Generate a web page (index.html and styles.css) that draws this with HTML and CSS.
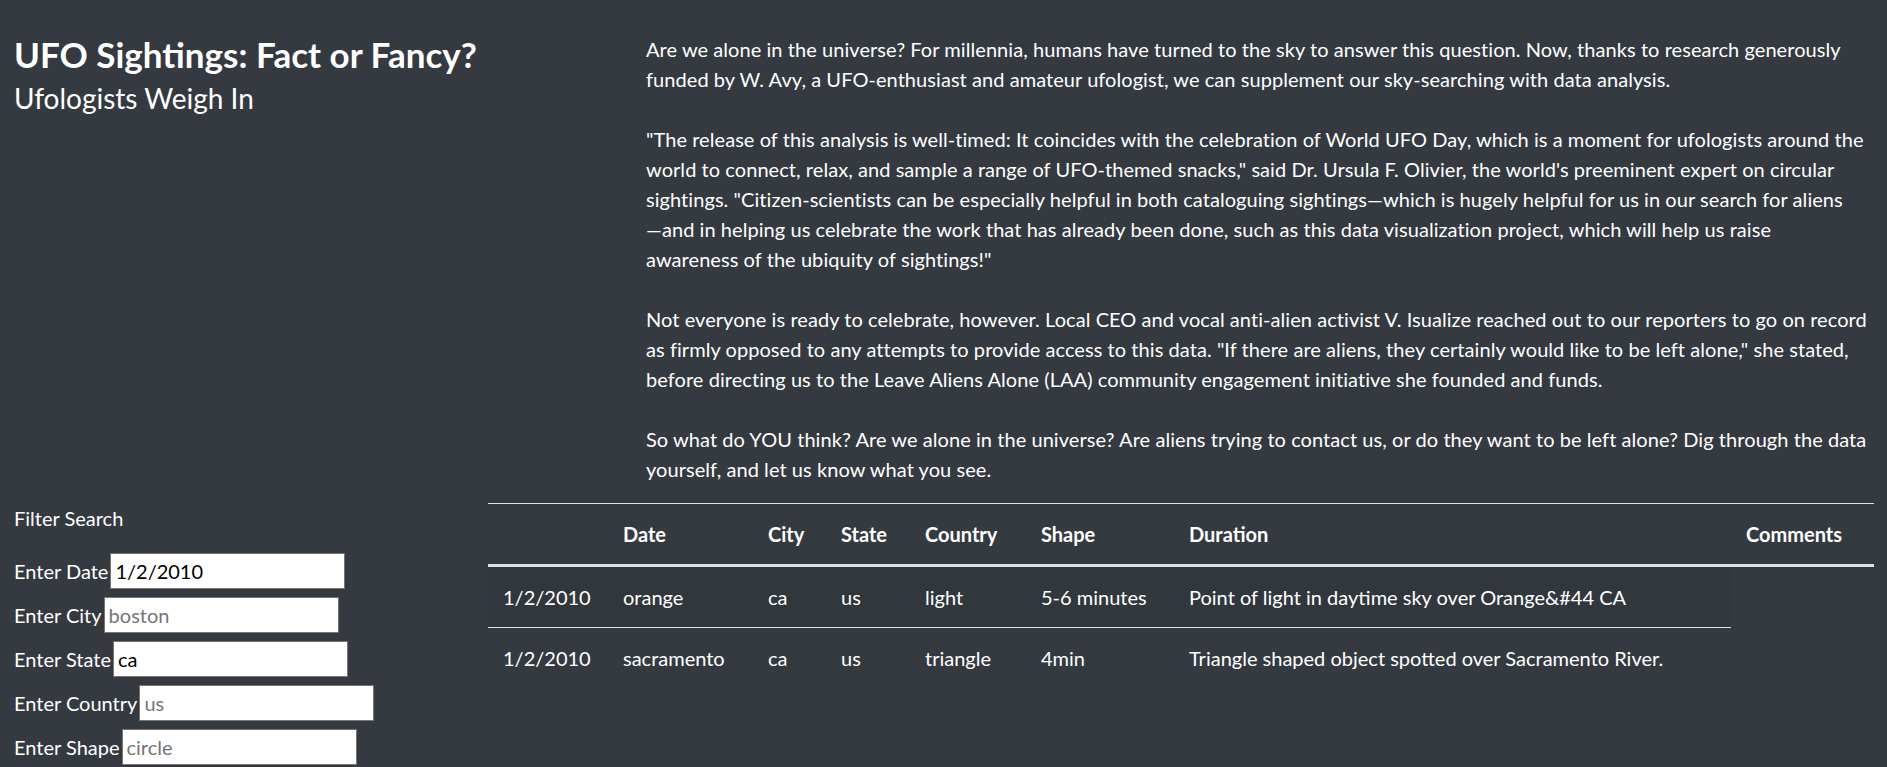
FILE: index.html
```html
<!DOCTYPE html>
<html lang="en">
<head>
<meta charset="utf-8">
<title>UFO Sightings</title>
<link rel="stylesheet" href="styles.css">
</head>
<body>
<div class="page">
  <header class="masthead">
    <h1 class="title">UFO Sightings: Fact or Fancy?</h1>
    <h2 class="subtitle">Ufologists Weigh In</h2>
  </header>
  <section class="story">
    <p>Are we alone in the universe? For millennia, humans have turned to the sky to answer this question. Now, thanks to research generously funded by W. Avy, a UFO-enthusiast and amateur ufologist, we can supplement our sky-searching with data analysis.</p>
    <p class="story-quote">"The release of this analysis is well-timed: It coincides with the celebration of World UFO Day, which is a moment for ufologists around the world to connect, relax, and sample a range of UFO-themed snacks," said Dr. Ursula F. Olivier, the world's preeminent expert on circular sightings. "Citizen-scientists can be especially helpful in both cataloguing sightings—which is hugely helpful for us in our search for aliens—&#8288;and in helping us celebrate the work that has already been done, such as this data visualization project, which will help us raise awareness of the ubiquity of sightings!"</p>
    <p>Not everyone is ready to celebrate, however. Local CEO and vocal anti-alien activist V. Isualize reached out to our reporters to go on record as firmly opposed to any attempts to provide access to this data. "If there are aliens, they certainly would like to be left alone," she stated, before directing us to the Leave Aliens Alone (LAA) community engagement initiative she founded and funds.</p>
    <p>So what do YOU think? Are we alone in the universe? Are aliens trying to contact us, or do they want to be left alone? Dig through the data yourself, and let us know what you see.</p>
  </section>
  <aside class="filters">
    <div class="filters-title">Filter Search</div>
    <ul class="filter-list">
      <li class="filter-row"><label for="f-date">Enter Date</label><input id="f-date" class="filter-input" type="text" value="1/2/2010"></li>
      <li class="filter-row"><label for="f-city">Enter City</label><input id="f-city" class="filter-input" type="text" placeholder="boston"></li>
      <li class="filter-row"><label for="f-state">Enter State</label><input id="f-state" class="filter-input" type="text" value="ca"></li>
      <li class="filter-row"><label for="f-country">Enter Country</label><input id="f-country" class="filter-input" type="text" placeholder="us"></li>
      <li class="filter-row"><label for="f-shape">Enter Shape</label><input id="f-shape" class="filter-input" type="text" placeholder="circle"></li>
    </ul>
  </aside>
  <section class="results">
    <table class="sightings">
      <colgroup>
        <col class="c-blank"><col class="c-date"><col class="c-city"><col class="c-state"><col class="c-country"><col class="c-shape"><col class="c-duration"><col class="c-comments">
      </colgroup>
      <thead>
        <tr><th></th><th>Date</th><th>City</th><th>State</th><th>Country</th><th>Shape</th><th>Duration</th><th>Comments</th></tr>
      </thead>
      <tbody>
        <tr class="striped"><td>1/2/2010</td><td>orange</td><td>ca</td><td>us</td><td>light</td><td>5-6 minutes</td><td>Point of light in daytime sky over Orange&amp;#44 CA</td></tr>
        <tr><td>1/2/2010</td><td>sacramento</td><td>ca</td><td>us</td><td>triangle</td><td>4min</td><td>Triangle shaped object spotted over Sacramento River.</td></tr>
      </tbody>
    </table>
  </section>
</div>
</body>
</html>
```

FILE: styles.css
```css
html, body {
  margin: 0;
  padding: 0;
  background: #343a40;
}
body {
  color: #ffffff;
  font-family: Lato, "Noto Sans", sans-serif;
  font-size: 20px;
  line-height: 30px;
}
.page {
  display: grid;
  grid-template-columns: 488px 158px 1fr;
  padding-right: 13px;
}
.masthead {
  grid-column: 1 / 3;
  padding: 33px 0 0 14px;
}
.title {
  margin: 0;
  font-size: 35px;
  line-height: 42px;
  font-weight: 700;
}
.subtitle {
  margin: 6px 0 0;
  font-size: 28px;
  line-height: 34px;
  font-weight: 400;
}
.story {
  grid-column: 3;
  padding: 34px 3px 0 0;
  letter-spacing: 0.06px;
}
.story p {
  margin: 0 0 30px;
}
.story .story-quote {
  padding-right: 5px;
}
.story p:last-child {
  margin-bottom: 19px;
}
.filters {
  grid-column: 1;
  padding: 0 0 0 14px;
}
.filters-title {
  margin-bottom: 20px;
}
.filter-list {
  list-style: none;
  margin: 0;
  padding: 0;
  display: flex;
  flex-direction: column;
  gap: 8px;
}
.filter-row {
  display: flex;
  align-items: center;
  height: 36px;
}
.filter-row label {
  margin-right: 2px;
}
.filter-input {
  box-sizing: border-box;
  width: 235px;
  height: 36px;
  padding: 0 4px;
  border: 1px solid #767676;
  background: #ffffff;
  color: #000000;
  font-family: Lato, "Noto Sans", sans-serif;
  font-size: 20px;
}
.filter-input::placeholder {
  color: #757575;
}
.results {
  grid-column: 2 / 4;
}
.sightings {
  width: 100%;
  table-layout: fixed;
  border-collapse: collapse;
  color: #ffffff;
}
.c-blank { width: 120px; }
.c-date { width: 145px; }
.c-city { width: 73px; }
.c-state { width: 84px; }
.c-country { width: 116px; }
.c-shape { width: 148px; }
.c-duration { width: 557px; }
.c-comments { width: auto; }
.sightings th,
.sightings td {
  padding: 15px;
  text-align: left;
  vertical-align: top;
  border-top: 1px solid #dee2e6;
  white-space: nowrap;
}
.sightings th {
  font-weight: 700;
  border-bottom: 3px solid #dee2e6;
}
.sightings tbody tr:first-child td {
  border-top: none;
}
.striped {
  background: rgba(0, 0, 0, 0.05);
}
```
